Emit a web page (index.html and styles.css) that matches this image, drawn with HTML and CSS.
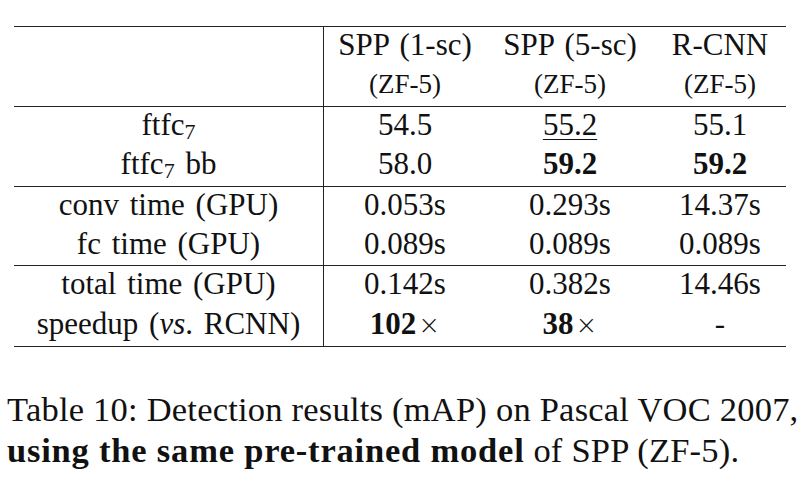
FILE: index.html
```html
<!DOCTYPE html>
<html>
<head>
<meta charset="utf-8">
<link rel="stylesheet" href="styles.css">
</head>
<body>
<div class="page">
  <table class="results">
    <tr class="head1">
      <td class="label"></td>
      <td class="c2">SPP (1-sc)</td>
      <td class="c3">SPP (5-sc)</td>
      <td class="c4">R-CNN</td>
    </tr>
    <tr class="head2">
      <td class="label"></td>
      <td>(ZF-5)</td>
      <td>(ZF-5)</td>
      <td>(ZF-5)</td>
    </tr>
    <tr class="sec">
      <td class="label">ftfc<sub>7</sub></td>
      <td>54.5</td>
      <td><span class="ul">55.2</span></td>
      <td>55.1</td>
    </tr>
    <tr>
      <td class="label">ftfc<sub>7</sub> bb</td>
      <td>58.0</td>
      <td><b>59.2</b></td>
      <td><b>59.2</b></td>
    </tr>
    <tr class="sec">
      <td class="label">conv time (GPU)</td>
      <td>0.053s</td>
      <td>0.293s</td>
      <td>14.37s</td>
    </tr>
    <tr>
      <td class="label">fc time (GPU)</td>
      <td>0.089s</td>
      <td>0.089s</td>
      <td>0.089s</td>
    </tr>
    <tr class="sec">
      <td class="label">total time (GPU)</td>
      <td>0.142s</td>
      <td>0.382s</td>
      <td>14.46s</td>
    </tr>
    <tr class="last">
      <td class="label">speedup (<i>vs</i>. RCNN)</td>
      <td><b>102</b><span class="times">×</span></td>
      <td><b>38</b><span class="times">×</span></td>
      <td>-</td>
    </tr>
  </table>
  <p class="caption">Table 10: Detection results (mAP) on Pascal VOC 2007, <b>using the same pre-trained model</b> of SPP (ZF-5).</p>
</div>
</body>
</html>
```

FILE: styles.css
```css
html, body {
  margin: 0;
  padding: 0;
  background: #ffffff;
}

.page {
  padding: 26px 0 0 14px;
  font-family: "Liberation Serif", "Times New Roman", serif;
  color: #111;
}

.results {
  border-collapse: collapse;
  border-top: 1px solid #222;
  border-bottom: 1px solid #222;
  table-layout: fixed;
  width: 772px;
}

.results td {
  padding: 0 0 3.4px 0;
  height: 36px;
  line-height: 36px;
  font-size: 31px;
  text-align: center;
  white-space: nowrap;
  word-spacing: 3px;
}

.results td.label {
  width: 309px;
  border-right: 1px solid #222;
}

.results td.c2 { width: 162px; }
.results td.c3 { width: 168px; }
.results td.c4 { width: 132px; }

.results tr.head2 td {
  font-size: 27px;
}

.results tr.sec td {
  border-top: 1px solid #222;
}

.results sub {
  font-size: 22px;
  vertical-align: -4px;
  line-height: 0;
}

.times {
  font-family: "DejaVu Sans", sans-serif;
  font-weight: 200;
  font-size: 26px;
  margin-left: 2px;
}

.ul {
  text-decoration: underline;
  text-decoration-thickness: 1px;
  text-underline-offset: 4px;
}

.caption {
  margin: 42px 0 0 -7px;
  width: 810px;
  font-size: 34.5px;
  line-height: 41px;
  letter-spacing: 0.22px;
}

.caption b {
  letter-spacing: 0.8px;
}
```
